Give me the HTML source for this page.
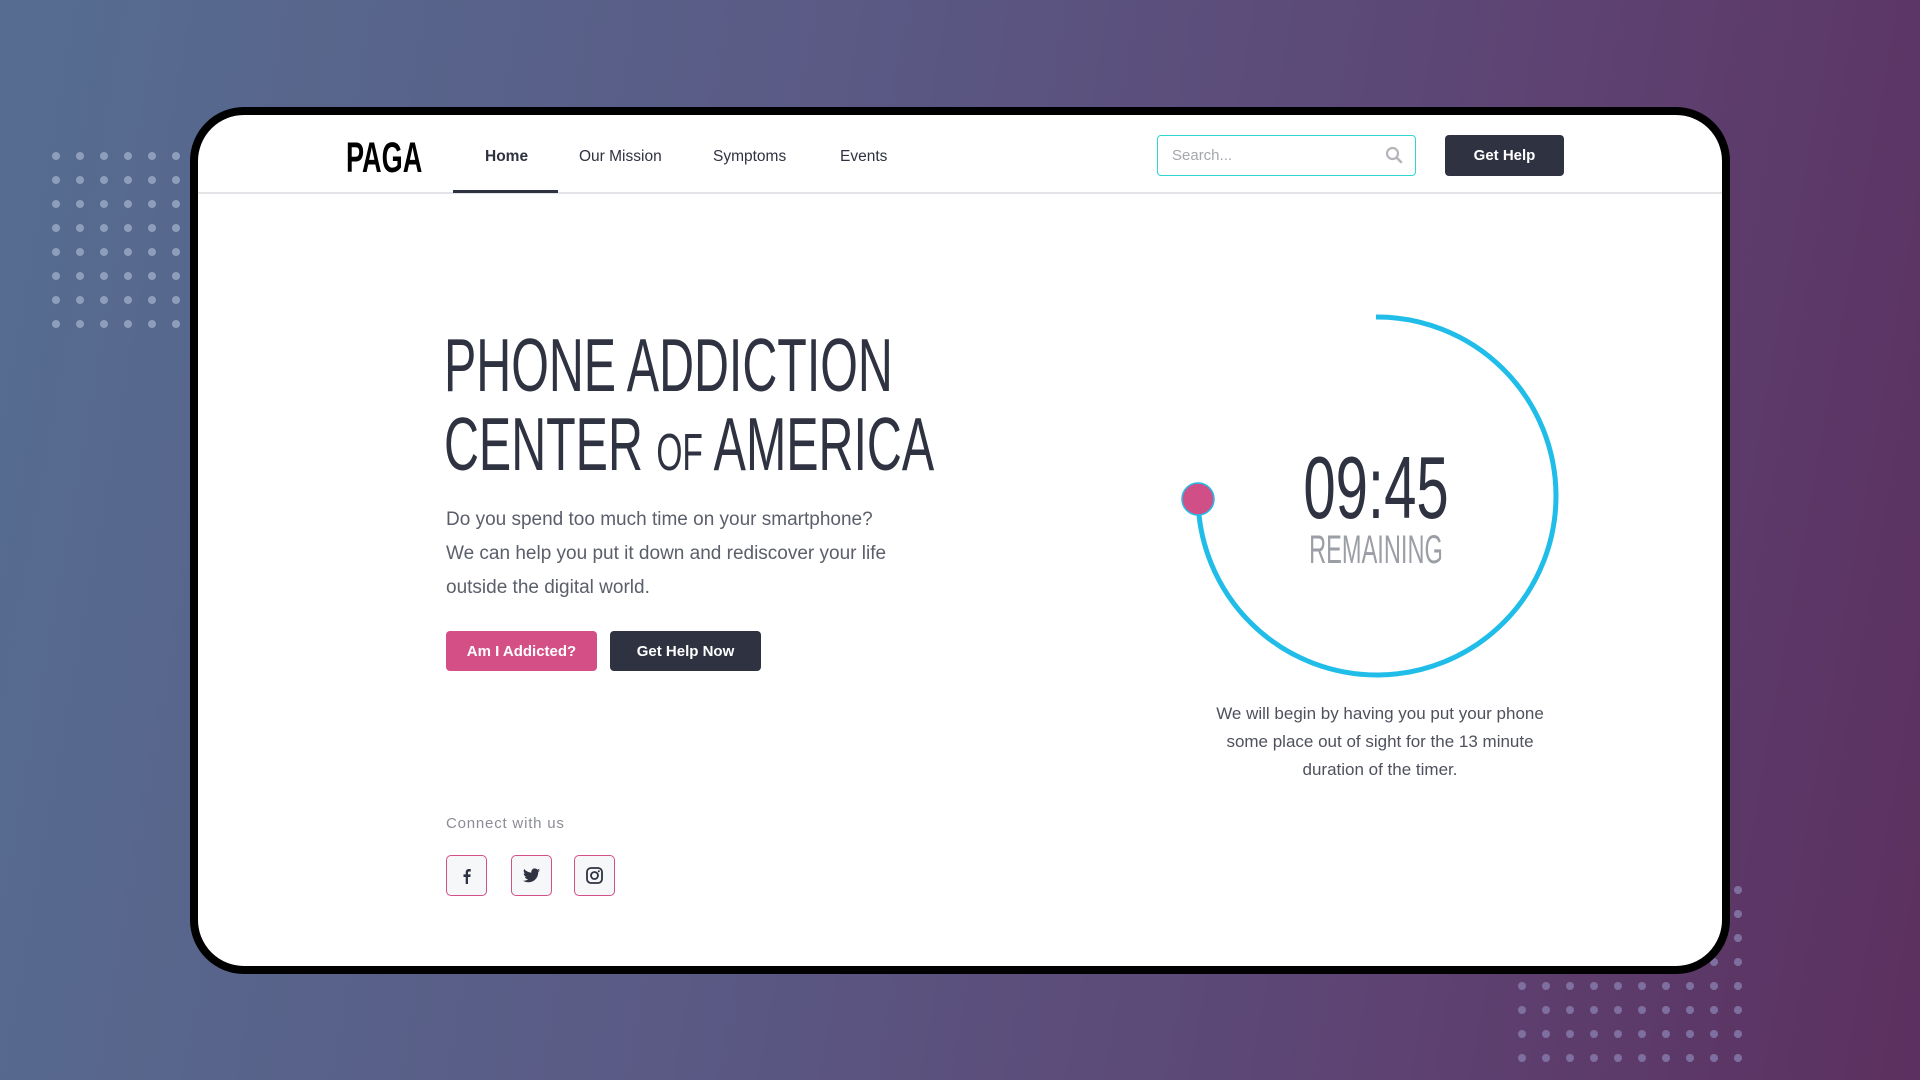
<!DOCTYPE html>
<html><head><meta charset="utf-8"><style>
*{margin:0;padding:0;box-sizing:border-box}
body{width:1920px;height:1080px;overflow:hidden;position:relative;background:linear-gradient(100deg,#566d91 0%,#5a5a85 40%,#5d4272 75%,#5c305f 100%);font-family:"Liberation Sans",sans-serif}
.abs{position:absolute}
.frame{left:190px;top:107px;width:1540px;height:867px;border:8px solid #000;border-radius:54px;background:#fff;overflow:hidden}
.nav{font-size:15.5px;color:#2f3240;top:148px}
.btn{border-radius:4px;color:#fff;font-weight:bold;font-size:15px;display:flex;align-items:center;justify-content:center}
.soc{width:41px;height:41px;border:1.5px solid #d44f86;border-radius:5px;background:#f6f7f9;display:flex;align-items:center;justify-content:center;top:855px}
</style></head><body>
<svg class="abs" style="left:0;top:0" width="1920" height="1080">
<defs>
<pattern id="p1" x="52" y="152" width="24" height="24" patternUnits="userSpaceOnUse"><circle cx="4" cy="4" r="4" fill="#8d9dbb"/></pattern>
<pattern id="p2" x="1518" y="886" width="24" height="24" patternUnits="userSpaceOnUse"><circle cx="4" cy="4" r="4" fill="#7f6fa0"/></pattern>
</defs>
<rect x="52" y="152" width="134" height="182" fill="url(#p1)"/>
<rect x="1518" y="886" width="230" height="182" fill="url(#p2)"/>
</svg>

<div class="abs frame">
<div class="abs" style="left:0;top:77px;width:100%;height:2px;background:#e3e4e7"></div>
<div class="abs" style="left:255px;top:75px;width:105px;height:3px;background:#2f3240"></div>
</div>

<div class="abs" style="left:346px;top:134px;font-size:43px;line-height:48px;font-weight:bold;color:#000;transform:scaleX(0.63);transform-origin:left top">PAGA</div>
<div class="abs nav" style="left:485px;font-weight:bold">Home</div>
<div class="abs nav" style="left:579px">Our Mission</div>
<div class="abs nav" style="left:713px">Symptoms</div>
<div class="abs nav" style="left:840px">Events</div>

<div class="abs" style="left:1157px;top:135px;width:259px;height:41px;border:1.5px solid #2fd6cf;border-radius:4px"></div>
<div class="abs" style="left:1172px;top:147px;font-size:15px;color:#a5a7ad">Search...</div>
<svg class="abs" style="left:1385px;top:146px" width="18" height="18" viewBox="0 0 18 18"><circle cx="7.5" cy="7.5" r="5.5" fill="none" stroke="#b3b5ba" stroke-width="2.2"/><path d="M11.5 11.5L16 16" stroke="#b3b5ba" stroke-width="2.6" stroke-linecap="round"/></svg>
<div class="abs btn" style="left:1445px;top:135px;width:119px;height:41px;background:#2f3240">Get Help</div>

<div class="abs" style="left:444px;top:326px;font-size:75px;line-height:79px;color:#2f3240;white-space:nowrap;transform:scaleX(0.645);transform-origin:left top">PHONE ADDICTION<br>CENTER <span style="font-size:52px">OF</span> AMERICA</div>

<div class="abs" style="left:446px;top:503px;font-size:19px;line-height:34px;color:#5b5e6b;white-space:nowrap">Do you spend too much time on your smartphone?<br>We can help you put it down and rediscover your life<br>outside the digital world.</div>

<div class="abs btn" style="left:446px;top:631px;width:151px;height:40px;background:#d44f86">Am I Addicted?</div>
<div class="abs btn" style="left:610px;top:631px;width:151px;height:40px;background:#2f3240">Get Help Now</div>

<div class="abs" style="left:446px;top:815px;font-size:15px;color:#8a8d96;letter-spacing:0.8px">Connect with us</div>
<div class="abs soc" style="left:446px"><svg width="16" height="16" viewBox="0 0 16 16"><path d="M9 16V9h2.3l.4-2.6H9V4.8c0-.8.3-1.3 1.3-1.3h1.5V1.2C11.4 1.1 10.7 1 10 1 8 1 6.7 2.2 6.7 4.4v2H4.5V9h2.2v7z" fill="#2f3240"/></svg></div>
<div class="abs soc" style="left:511px"><svg width="17" height="15" viewBox="0 0 24 20"><path d="M24 2.4c-.9.4-1.8.7-2.8.8 1-.6 1.8-1.6 2.2-2.7-1 .6-2 1-3.1 1.2C19.4.7 18.1 0 16.7 0c-2.7 0-4.9 2.2-4.9 4.9 0 .4 0 .8.1 1.1C7.8 5.8 4.1 3.9 1.7.9c-.4.7-.7 1.600-.7 2.5 0 1.7.9 3.2 2.2 4.1-.8 0-1.6-.2-2.2-.6v.1c0 2.4 1.7 4.4 3.9 4.8-.4.1-.8.2-1.3.2-.3 0-.6 0-.9-.1.6 2 2.4 3.4 4.6 3.4-1.7 1.3-3.8 2.1-6.1 2.1-.4 0-.8 0-1.200-.1C2.2 18.8 4.8 19.6 7.5 19.6c9.1 0 14-7.5 14-14v-.6c1-.7 1.8-1.6 2.5-2.6z" fill="#2f3240"/></svg></div>
<div class="abs soc" style="left:574px"><svg width="17" height="17" viewBox="0 0 17 17"><rect x="1" y="1" width="15" height="15" rx="4" fill="none" stroke="#2f3240" stroke-width="1.8"/><circle cx="8.5" cy="8.5" r="3.5" fill="none" stroke="#2f3240" stroke-width="1.8"/><circle cx="12.8" cy="4.2" r="1" fill="#2f3240"/></svg></div>

<svg class="abs" style="left:0;top:0" width="1920" height="1080">
<path d="M1376 317 A179 179 0 1 1 1198 498" fill="none" stroke="#21bde9" stroke-width="5"/>
<circle cx="1198" cy="499" r="16" fill="#d14f87" stroke="#21bde9" stroke-width="1.5"/>
</svg>
<div class="abs" style="left:1176px;top:438px;width:400px;text-align:center;white-space:nowrap;font-size:88px;line-height:100px;color:#2f3240;transform:scaleX(0.66);transform-origin:center top">09:45</div>
<div class="abs" style="left:1176px;top:527px;width:400px;text-align:center;white-space:nowrap;font-size:40px;line-height:46px;color:#9c9ea6;transform:scaleX(0.59);transform-origin:center top">REMAINING</div>
<div class="abs" style="left:1180px;top:700px;width:400px;text-align:center;white-space:nowrap;font-size:17px;line-height:28px;color:#4f525d">We will begin by having you put your phone<br>some place out of sight for the 13 minute<br>duration of the timer.</div>
</body></html>
